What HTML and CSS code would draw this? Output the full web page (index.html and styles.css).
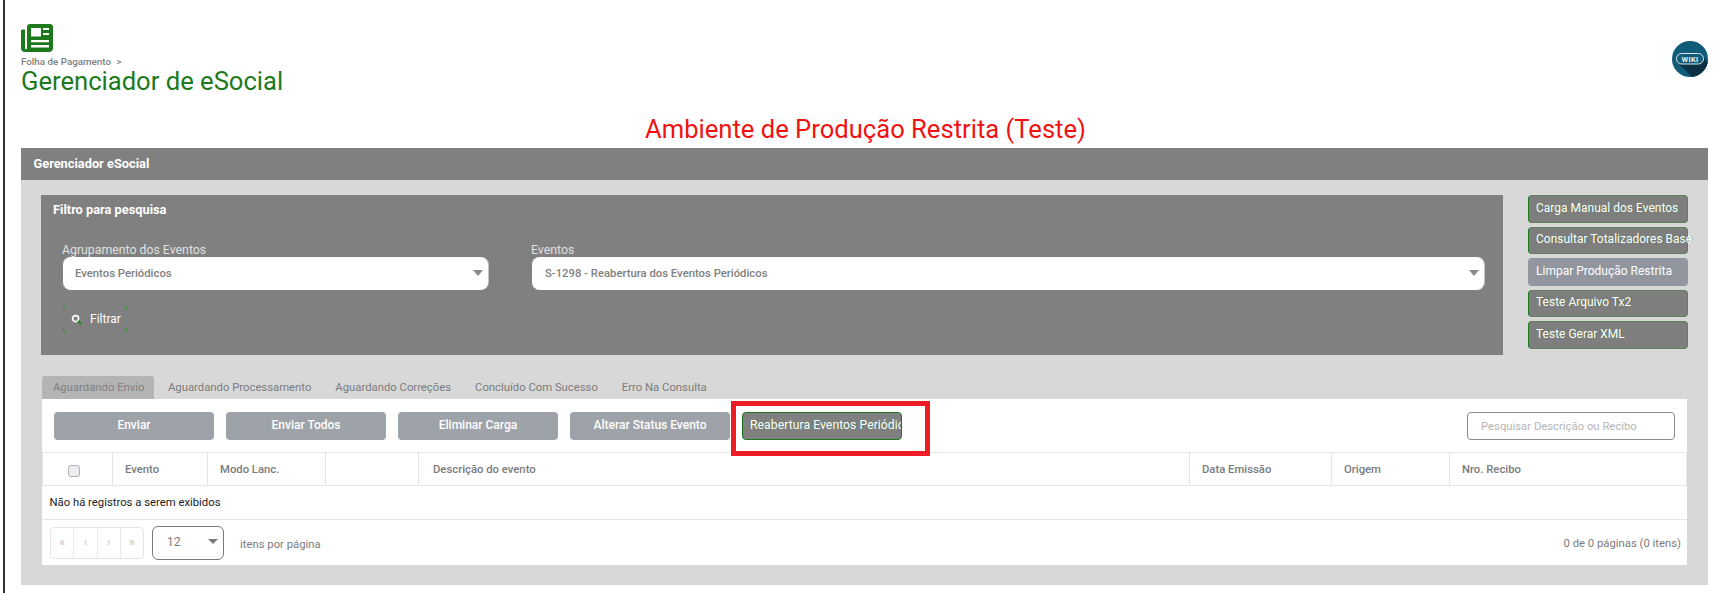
FILE: index.html
```html
<!DOCTYPE html>
<html lang="pt-BR">
<head>
<meta charset="utf-8">
<title>Gerenciador de eSocial</title>
<link rel="stylesheet" href="styles.css">
</head>
<body>
<div class="page">
  <header class="top">
    <div class="top-left">
      <svg class="news-icon" viewBox="0 0 32 28" aria-hidden="true">
        <path fill-rule="evenodd" d="M6 3c0-1.800 1.200-3 3-3h20c1.800 0 3 1.200 3 3v21c0 2.400-1.600 4-4 4H4c-2.400 0-4-1.600-4-4V7c0-1 .6-1.500 1.500-1.500H4V24c0 .8.4 1.300 1 1.300s1-.5 1-1.300zM10 4v8.500h10V4zm12 0v2h6V4zm0 5v2h6V9zM10 16v2.200h18V16zm0 5v2.500h18V21z"/>
      </svg>
      <div class="crumb">Folha de Pagamento <span class="crumb-sep">&gt;</span></div>
      <h1 class="title">Gerenciador de eSocial</h1>
    </div>
    <svg class="wiki" viewBox="0 0 36 36" role="img" aria-label="Wiki">
      <defs><clipPath id="wc"><circle cx="18" cy="18" r="18"/></clipPath></defs>
      <circle cx="18" cy="18" r="18" fill="#0e5c78"/>
      <path clip-path="url(#wc)" d="M6 22 L20 36 L36 36 L36 21 L31 16 Z" fill="#0b3145"/>
      <rect x="4.500" y="12.500" width="27" height="10.500" rx="5.200" fill="#0e5c78" stroke="#dfe8ec" stroke-width="1"/>
      <text x="18" y="20.600" text-anchor="middle" class="wiki-text">WIKI</text>
    </svg>
  </header>

  <h2 class="env">Ambiente de Produção Restrita (Teste)</h2>

  <section class="manager">
    <div class="manager-head">Gerenciador eSocial</div>
    <div class="manager-body">
      <div class="upper">
        <div class="filter">
          <div class="filter-title">Filtro para pesquisa</div>
          <div class="fields">
            <div class="field field-a">
              <label class="field-label">Agrupamento dos Eventos</label>
              <div class="select select-a">Eventos Periódicos</div>
            </div>
            <div class="field field-b">
              <label class="field-label">Eventos</label>
              <div class="select">S-1298 - Reabertura dos Eventos Periódicos</div>
            </div>
          </div>
          <button class="filter-btn">
            <svg class="filter-corners" viewBox="0 0 66 30" aria-hidden="true">
              <path d="M1 6 Q1.800 2.500 4 1M62 1 Q64.500 2.500 65 6M1 24 Q1.800 27.500 4 29M62 29 Q64.500 27.500 65 24"/>
            </svg>
            <svg class="search-icon" viewBox="0 0 12 12" aria-hidden="true">
              <circle cx="5" cy="5" r="3.300"/><path d="M7.500 7.500L11 11"/>
            </svg>
            Filtrar
          </button>
        </div>
        <div class="side">
          <button class="side-btn">Carga Manual dos Eventos</button>
          <button class="side-btn">Consultar Totalizadores Base</button>
          <button class="side-btn side-off">Limpar Produção Restrita</button>
          <button class="side-btn">Teste Arquivo Tx2</button>
          <button class="side-btn">Teste Gerar XML</button>
        </div>
      </div>

      <div class="tabs">
        <div class="tab tab-on">Aguardando Envio</div>
        <div class="tab">Aguardando Processamento</div>
        <div class="tab">Aguardando Correções</div>
        <div class="tab">Concluído Com Sucesso</div>
        <div class="tab">Erro Na Consulta</div>
      </div>

      <div class="card">
        <div class="toolbar">
          <button class="act">Enviar</button>
          <button class="act">Enviar Todos</button>
          <button class="act">Eliminar Carga</button>
          <button class="act">Alterar Status Evento</button>
          <button class="act act-on">Reabertura Eventos Periódicos</button>
          <input class="search" placeholder="Pesquisar Descrição ou Recibo">
          <div class="redbox"></div>
        </div>
        <table class="grid">
          <colgroup>
            <col class="c1"><col class="c2"><col class="c3"><col class="c4"><col class="c5"><col class="c6"><col class="c7"><col>
          </colgroup>
          <thead>
            <tr>
              <th class="th-check"><span class="check"></span></th>
              <th>Evento</th>
              <th>Modo Lanc.</th>
              <th></th>
              <th class="th-desc">Descrição do evento</th>
              <th>Data Emissão</th>
              <th>Origem</th>
              <th>Nro. Recibo</th>
            </tr>
          </thead>
          <tbody>
            <tr><td colspan="8">Não há registros a serem exibidos</td></tr>
          </tbody>
        </table>
        <div class="pager">
          <div class="pages">
            <span class="pg">«</span><span class="pg">‹</span><span class="pg">›</span><span class="pg">»</span>
          </div>
          <div class="size">12</div>
          <span class="per">itens por página</span>
          <span class="count">0 de 0 páginas (0 itens)</span>
        </div>
      </div>
    </div>
  </section>
</div>
</body>
</html>
```

FILE: styles.css
```css
* { box-sizing: border-box; }
html, body { margin: 0; height: 100%; }
body {
  background: #fff;
  font-family: Roboto, "Liberation Sans", sans-serif;
  overflow: hidden;
}
.page {
  height: 593px;
  margin-left: 3px;
  border-left: 2px solid #2e303a;
  padding: 24px 19px 0 16px;
}
.top { display: flex; justify-content: space-between; align-items: flex-start; height: 84px; }
.top-left { display: flex; flex-direction: column; align-items: flex-start; }
.news-icon { width: 32px; height: 28px; fill: #1c7a1c; display: block; }
.crumb { font-size: 9.800px; font-weight: 500; line-height: 13px; color: #808080; margin-top: 3px; }
.crumb-sep { margin-left: 3px; }
.title { margin: -2px 0 0; font-size: 25.600px; font-weight: 400; line-height: 30px; color: #1c7a1c; }
.wiki { width: 36px; height: 36px; margin-top: 17px; }
.wiki-text { font: 700 7.500px Roboto, sans-serif; fill: #e8eff2; letter-spacing: .3px; }
.env { margin: 6px 0 0 -9px; height: 34px; font-size: 25.600px; line-height: 30px; font-weight: 400; color: #f01212; text-align: center; width: 1707px; }

.manager { width: 1687px; }
.manager-head {
  height: 32px;
  background: #808080;
  color: #fff;
  font-size: 12.800px;
  font-weight: 700;
  line-height: 32px;
  padding-left: 12.500px;
}
.manager-body { background: #d8d8d8; height: 405px; padding: 15px 20px 0; }
.upper { display: flex; gap: 25px; }
.filter { position: relative; width: 1462px; height: 160px; background: #808080; padding: 7px 12px 0; }
.filter-title { font-size: 12.800px; font-weight: 700; line-height: 15px; color: #fff; }
.fields { display: flex; gap: 44px; margin: 32px 0 0 10px; }
.field { display: flex; flex-direction: column; }
.field-a { width: 425px; }
.field-b { width: 952px; }
.field-label { font-size: 12.300px; line-height: 8px; height: 8px; color: #e0e0e0; margin: -3px 0 3px -1px; }
.select {
  position: relative;
  height: 33px;
  line-height: 33px;
  background: #fff;
  border-radius: 8px;
  box-shadow: 1px 0 0 #c4c4c4;
  color: #808080;
  font-size: 11.300px;
  font-weight: 500;
  padding-left: 13px;
}
.select-a { padding-left: 12px; }
.select::before {
  content: "";
  position: absolute;
  inset: -1px;
  border: 1px dotted #d4d4d4;
  border-radius: 9px;
  -webkit-mask: linear-gradient(#000 0 0) 0 0/7px 7px no-repeat, linear-gradient(#000 0 0) 100% 0/7px 7px no-repeat, linear-gradient(#000 0 0) 0 100%/7px 7px no-repeat, linear-gradient(#000 0 0) 100% 100%/7px 7px no-repeat;
  mask: linear-gradient(#000 0 0) 0 0/7px 7px no-repeat, linear-gradient(#000 0 0) 100% 0/7px 7px no-repeat, linear-gradient(#000 0 0) 0 100%/7px 7px no-repeat, linear-gradient(#000 0 0) 100% 100%/7px 7px no-repeat;
}
.select::after {
  content: "";
  position: absolute;
  right: 5px;
  top: 13px;
  border: 5px solid transparent;
  border-top: 6px solid #8a8a8a;
  border-bottom: 0;
}
.filter-btn {
  position: relative;
  display: flex;
  align-items: center;
  width: 66px;
  height: 30px;
  margin: 14px 0 0 9px;
  padding: 0 0 0 9px;
  gap: 8px;
  border: 0;
  background: none;
  color: #fff;
  font: 400 12px Roboto, sans-serif;
}
.filter-corners { position: absolute; left: 0; top: 0; width: 66px; height: 30px; fill: none; stroke: #2a9a2a; stroke-width: 1; }
.search-icon { width: 11px; height: 11px; fill: none; stroke: #fff; stroke-width: 1.800; }
.search-icon path { stroke: #1c8a1c; stroke-width: 2.200; }

.side { display: flex; flex-direction: column; gap: 4px; width: 160px; }
.side-btn {
  height: 27.500px;
  padding: 0 0 2px 7px;
  background: #7e7e7e;
  border: 1px solid #5f7f5f;
  border-left-color: #1c7a1c;
  border-radius: 4px;
  color: #fff;
  font: 400 12px Roboto, sans-serif;
  text-align: left;
  white-space: nowrap;
  overflow: visible;
  text-shadow: 1px 0 0 rgba(30, 130, 30, .45);
}
.side-off { background: #91969e; border: 0; padding-left: 8px; text-shadow: none; }

.tabs { display: flex; margin: 21px 0 0 1px; height: 23px; }
.tab {
  padding: 0 12px;
  color: #7b7b7b;
  font-size: 11.300px;
  line-height: 24px;
  white-space: nowrap;
  border-radius: 3px 3px 0 0;
}
.tab-on { background: #b4b4b4; width: 112px; padding: 0 11px; margin-right: 2px; color: #808080; }

.card { background: #fff; width: 1645px; height: 166px; margin-left: 1px; }
.toolbar { position: relative; display: flex; align-items: flex-start; gap: 12px; height: 53px; padding: 13px 0 0 12px; }
.act {
  width: 160px;
  height: 28px;
  background: #9ea3a9;
  border: 0;
  border-radius: 4px;
  color: #fff;
  font: 500 12px Roboto, sans-serif;
  white-space: nowrap;
  overflow: hidden;
  padding: 0 0 3px;
}
.act-on {
  background: #808080;
  border: 1px solid #1c7a1c;
  text-align: left;
  padding: 0 0 3px 7px;
  font-weight: 400;
  font-size: 12.300px;
  text-shadow: 1px 0 0 rgba(30, 130, 30, .45);
}
.search {
  margin-left: auto;
  margin-right: 12px;
  width: 208px;
  height: 28px;
  border: 1px solid #8c8c8c;
  border-radius: 4px;
  padding: 0 13px;
  font: 400 11.300px Roboto, sans-serif;
  background: #fff;
}
.search::placeholder { color: #b5b5b5; }
.redbox {
  position: absolute;
  left: 689px;
  top: 2px;
  width: 199px;
  height: 55px;
  border: 5px solid #ee1c25;
}
.grid {
  width: 100%;
  border-collapse: collapse;
  table-layout: fixed;
  font-size: 11.300px;
}
.c1 { width: 70px; } .c2 { width: 95px; } .c3 { width: 118px; } .c4 { width: 93px; }
.c5 { width: 771px; } .c6 { width: 142px; } .c7 { width: 118px; }
.grid th {
  height: 33px;
  padding: 0 0 0 12px;
  text-align: left;
  font-weight: 500;
  color: #7b7b7b;
  border: 1px solid #e2e5ea;
  border-width: 1.500px 1px 1px;
}
.grid th.th-check { padding: 3px 0 0 25px; }
.grid th.th-desc { padding-left: 14px; }
.check { display: block; width: 12px; height: 12px; border: 1px solid #aab0b8; border-radius: 3px; background: #eceef1; }
.grid td {
  height: 34px;
  padding: 0 0 1px 7px;
  color: #222;
  border-bottom: 1px solid #e2e5ea;
}
.pager { display: flex; align-items: center; height: 46px; padding: 0 6px 0 8px; font-size: 11.300px; color: #7b7b7b; }
.pages { display: flex; width: 94px; height: 32px; border: 1px solid #e2e5ea; border-radius: 4px; }
.pg { flex: 1; border-left: 1px solid #e8eaee; text-align: center; line-height: 28px; color: #c4c4c4; font-size: 13px; }
.pg:first-child { border-left: 0; }
.size {
  position: relative;
  width: 72px;
  height: 34px;
  margin-left: 8px;
  border: 1px solid #7a7a7a;
  border-radius: 6px;
  padding-left: 14px;
  line-height: 30px;
  font-size: 12px;
}
.size::after {
  content: "";
  position: absolute;
  right: 5px;
  top: 12px;
  border: 5px solid transparent;
  border-top: 5px solid #7a7a7a;
  border-bottom: 0;
}
.per { margin-left: 16px; padding-top: 2px; }
.count { margin-left: auto; }
```
